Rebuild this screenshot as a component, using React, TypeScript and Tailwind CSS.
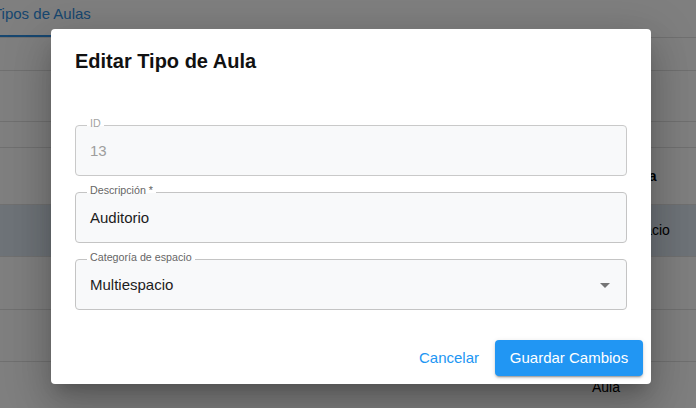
import React from "react";

const font = { fontFamily: '"Liberation Sans", Arial, sans-serif' };

function Field({
  label,
  value,
  disabled,
  select,
}: {
  label: string;
  value: string;
  disabled?: boolean;
  select?: boolean;
}) {
  return (
    <div
      className={`relative h-[51px] rounded-[4px] border bg-[#f8f9fa] flex items-center pl-[14px] pr-[8px] ${
        disabled ? "border-[#c9c9c9]" : "border-[#c4c4c4]"
      }`}
    >
      <span
        className={`absolute left-[11px] top-[-9px] px-[3px] text-[10.7px] leading-[12px] bg-[linear-gradient(to_bottom,#ffffff_9px,#f8f9fa_9px)] ${
          disabled ? "text-[#a3a3a3]" : "text-[#666666]"
        }`}
      >
        {label}
      </span>
      <span
        className={`flex-1 text-[15px] leading-[18px] ${
          disabled ? "text-[#9e9e9e]" : "text-[#1c1c1c]"
        }`}
      >
        {value}
      </span>
      {select && (
        <svg width="24" height="24" viewBox="0 0 24 24" className="mr-[1px]">
          <path d="M7 10l5 5 5-5z" fill="#757575" />
        </svg>
      )}
    </div>
  );
}

export default function App() {
  return (
    <div className="relative w-[696px] h-[408px] overflow-hidden bg-white" style={font}>
      {/* underlying page */}
      <div className="flex flex-col w-full">
        <div className="h-[38px] border-b border-[#e0e0e0] flex items-end">
          <div className="ml-[-7px] h-[38px] flex flex-col justify-between">
            <span className="pt-[6px] text-[15px] leading-[17px] text-[#2f8ee0]">Tipos de Aulas</span>
            <div className="ml-[2px] h-[2px] w-[115px] bg-[#2f8ee0]" />
          </div>
        </div>
        <div className="h-[33px] border-b border-[#e0e0e0]" />
        <div className="h-[51px] border-b border-[#e0e0e0]" />
        <div className="h-[26px] border-b border-[#e0e0e0]" />
        <div className="h-[57px] border-b border-[#e0e0e0] grid grid-cols-[592px_1fr] items-center">
          <div />
          <span className="text-[14px] font-bold text-black">Categoría</span>
        </div>
        <div className="h-[52px] border-b border-[#e0e0e0] bg-[#dde6f0] grid grid-cols-[592px_1fr] items-center">
          <div />
          <span className="text-[14px] text-black">Multiespacio</span>
        </div>
        <div className="h-[53px] border-b border-[#e0e0e0] grid grid-cols-[592px_1fr] items-center">
          <div />
          <span className="text-[14px] text-black">Taller</span>
        </div>
        <div className="h-[52px] border-b border-[#e0e0e0] grid grid-cols-[592px_1fr] items-center">
          <div />
          <span className="text-[14px] text-black">Aula</span>
        </div>
        <div className="h-[52px] border-b border-[#e0e0e0] grid grid-cols-[592px_1fr] items-center">
          <div />
          <span className="text-[14px] text-black">Aula</span>
        </div>
      </div>

      {/* backdrop */}
      <div className="absolute inset-0 bg-black/50" />

      {/* dialog */}
      <div className="absolute left-[51px] top-[29px] w-[600px] h-[355px] bg-white rounded-[4px] flex flex-col shadow-[0px_11px_15px_-7px_rgba(0,0,0,0.2),0px_24px_38px_3px_rgba(0,0,0,0.14),0px_9px_46px_8px_rgba(0,0,0,0.12)]">
        <div className="px-6 pt-4">
          <h2 className="text-[20px] leading-[32px] font-bold text-[#111111]">Editar Tipo de Aula</h2>
        </div>
        <div className="px-6 pt-[48px] pb-[22px] flex flex-col gap-4">
          <Field label="ID" value="13" disabled />
          <Field label="Descripción *" value="Auditorio" />
          <Field label="Categoría de espacio" value="Multiespacio" select />
        </div>
        <div className="p-2 flex justify-end gap-2">
          <button className="h-[36px] px-2 rounded-[4px] text-[15px] text-[#2196f3]">Cancelar</button>
          <button className="h-[36px] w-[148px] rounded-[4px] bg-[#2196f3] text-[15px] text-white shadow-[0px_3px_1px_-2px_rgba(0,0,0,0.2),0px_2px_2px_0px_rgba(0,0,0,0.14),0px_1px_5px_0px_rgba(0,0,0,0.12)]">
            Guardar Cambios
          </button>
        </div>
      </div>
    </div>
  );
}
